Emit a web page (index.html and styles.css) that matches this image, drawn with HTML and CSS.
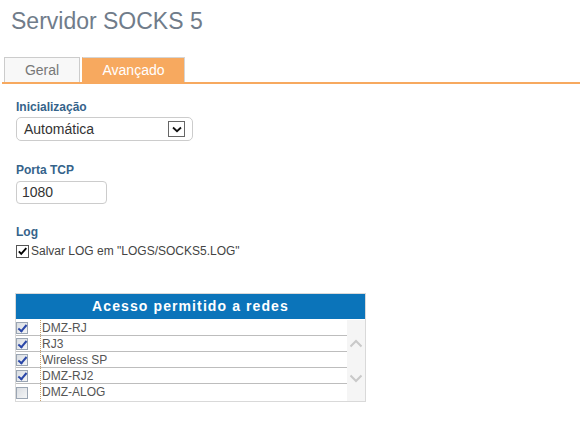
FILE: index.html
```html
<!DOCTYPE html>
<html lang="pt">
<head>
<meta charset="utf-8">
<title>Servidor SOCKS 5</title>
<link rel="stylesheet" href="styles.css">
</head>
<body>
<h1 class="title">Servidor SOCKS 5</h1>
<div class="tabs">
  <div class="tab">Geral</div>
  <div class="tab active">Avançado</div>
</div>
<div class="content">
  <div class="label label-first">Inicialização</div>
  <div class="select">
    <span class="select-text">Automática</span>
    <span class="select-arrow">
      <svg width="10" height="7" viewBox="0 0 10 7"><path d="M1 1.5 L5 5.2 L9 1.5" fill="none" stroke="#111" stroke-width="1.8"/></svg>
    </span>
  </div>

  <div class="label label-gap">Porta TCP</div>
  <div class="input">1080</div>

  <div class="label label-gap2">Log</div>
  <div class="check-row">
    <span class="cb">
      <svg width="13" height="13" viewBox="0 0 13 13"><path d="M2.2 6.3 L5 9.4 L11 2.4" fill="none" stroke="#000" stroke-width="2.2"/></svg>
    </span>
    <span class="check-text">Salvar LOG em "LOGS/SOCKS5.LOG"</span>
  </div>

  <div class="grid">
    <div class="grid-head">Acesso permitido a redes</div>
    <div class="grid-body">
      <div class="rows">
        <div class="row"><span class="cell-cb"><span class="mini on"></span></span><span class="cell-name">DMZ-RJ</span></div>
        <div class="row"><span class="cell-cb"><span class="mini on"></span></span><span class="cell-name">RJ3</span></div>
        <div class="row"><span class="cell-cb"><span class="mini on"></span></span><span class="cell-name">Wireless SP</span></div>
        <div class="row"><span class="cell-cb"><span class="mini on"></span></span><span class="cell-name">DMZ-RJ2</span></div>
        <div class="row last"><span class="cell-cb"><span class="mini"></span></span><span class="cell-name">DMZ-ALOG</span></div>
      </div>
      <div class="scroll">
        <svg width="14" height="9" viewBox="0 0 14 9"><path d="M1.5 7.5 L7 2 L12.5 7.5" fill="none" stroke="#c9c9c9" stroke-width="2"/></svg>
        <svg width="14" height="9" viewBox="0 0 14 9"><path d="M1.5 1.5 L7 7 L12.5 1.5" fill="none" stroke="#c9c9c9" stroke-width="2"/></svg>
      </div>
    </div>
  </div>
</div>
</body>
</html>
```

FILE: styles.css
```css
html, body {
  margin: 0;
  padding: 0;
  background: #fff;
  font-family: "Liberation Sans", Arial, sans-serif;
}

.title {
  margin: 0;
  padding: 7px 0 0 11px;
  font-size: 23px;
  line-height: 28px;
  font-weight: normal;
  color: #707c8a;
}

.tabs {
  display: flex;
  gap: 2px;
  margin: 22px 0 0 2px;
  padding-left: 2px;
  border-bottom: 2px solid #f7a95f;
}

.tab {
  box-sizing: border-box;
  height: 25px;
  width: 76px;
  border: 1px solid #cccccc;
  border-bottom: none;
  background: #f8f8f8;
  color: #777;
  font-size: 14px;
  line-height: 24px;
  text-align: center;
}

.tab.active {
  width: 103px;
  background: #f7a95f;
  color: #fff;
  border-color: #d5d5d5;
  border-left-color: #f7a95f;
}

.content {
  padding-left: 16px;
}

.label {
  font-size: 12px;
  line-height: 14px;
  font-weight: bold;
  color: #35638a;
}

.label-first { margin-top: 16px; }
.label-gap { margin-top: 22px; }
.label-gap2 { margin-top: 21px; }

.select {
  box-sizing: border-box;
  margin-top: 3px;
  width: 177px;
  height: 24px;
  border: 1px solid #cccccc;
  border-radius: 5px;
  display: flex;
  align-items: center;
  justify-content: space-between;
  padding: 0 7px 0 7px;
}

.select-text {
  font-size: 14px;
  color: #333;
}

.select-arrow {
  box-sizing: border-box;
  width: 17px;
  height: 16px;
  border: 1px solid #666;
  background: #fff;
  display: flex;
  align-items: center;
  justify-content: center;
}

.input {
  box-sizing: border-box;
  margin-top: 4px;
  width: 91px;
  height: 23px;
  border: 1px solid #cccccc;
  border-radius: 4px;
  padding-left: 5px;
  font-size: 14px;
  line-height: 21px;
  color: #333;
}

.check-row {
  display: flex;
  align-items: center;
  margin-top: 5px;
  height: 14px;
}

.cb {
  box-sizing: border-box;
  width: 13px;
  height: 13px;
  border: 1px solid #555;
  margin-right: 2px;
  display: flex;
  align-items: center;
  justify-content: center;
}

.cb svg { display: block; }

.check-text {
  font-size: 12px;
  color: #444;
}

.grid {
  box-sizing: border-box;
  margin: 35px 0 0 -1px;
  width: 351px;
  border: 1px solid #d9d9d9;
}

.grid-head {
  height: 25px;
  background: #0b74ba;
  color: #fff;
  font-size: 14px;
  font-weight: bold;
  letter-spacing: 1.1px;
  line-height: 25px;
  text-align: center;
}

.grid-body {
  display: flex;
  padding-top: 1px;
}

.rows {
  flex: 1;
}

.row {
  display: flex;
  box-sizing: border-box;
  height: 16px;
  border-bottom: 1px solid #bdbdbd;
}

.row.last {
  border-bottom: none;
  height: 17px;
}

.cell-cb {
  width: 24px;
  display: flex;
  align-items: center;
}

.mini {
  box-sizing: border-box;
  width: 12px;
  height: 12px;
  border: 1px solid #9aa5b3;
  background: linear-gradient(135deg, #d9dde2 0%, #f4f5f6 100%);
  position: relative;
}

.mini.on::after {
  content: "";
  position: absolute;
  left: 3px;
  top: 0px;
  width: 3px;
  height: 7px;
  border-right: 2px solid #2a47a8;
  border-bottom: 2px solid #2a47a8;
  transform: rotate(40deg);
}

.cell-name {
  flex: 1;
  border-left: 1px dotted #c9a06a;
  padding-left: 1px;
  font-size: 12px;
  line-height: 16px;
  color: #555;
}

.scroll {
  width: 18px;
  background: #f5f5f5;
  display: flex;
  flex-direction: column;
  align-items: center;
  justify-content: center;
  gap: 26px;
}

.scroll svg { display: block; }
```
